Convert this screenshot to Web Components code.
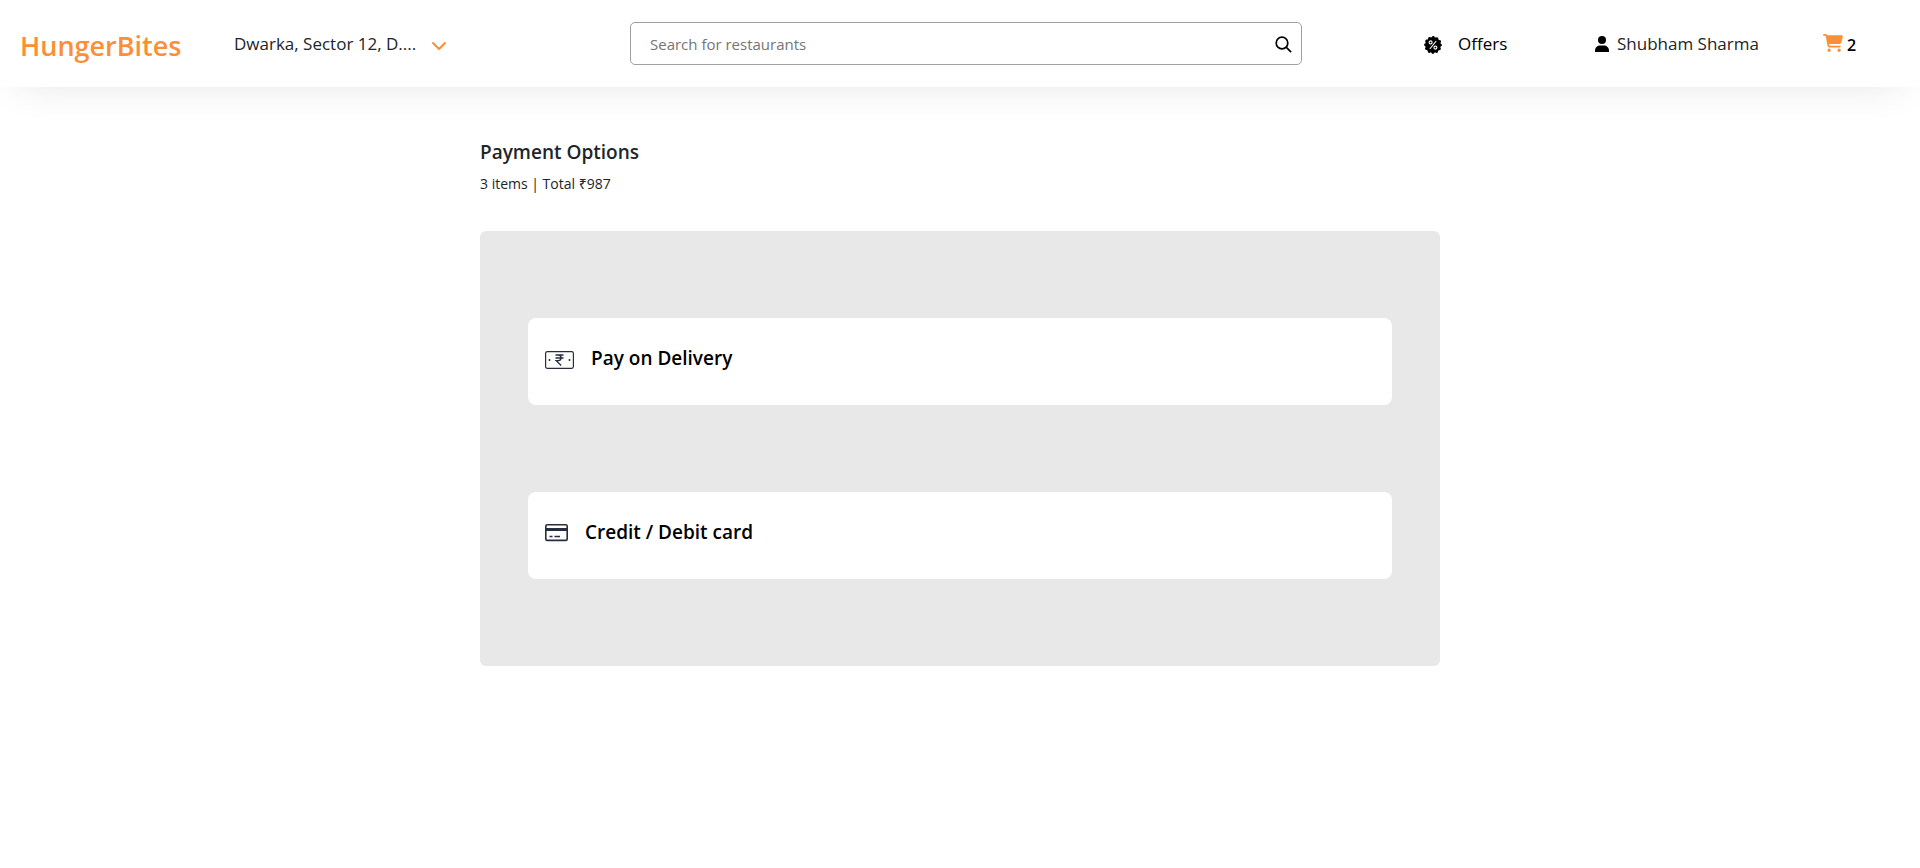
<!DOCTYPE html>
<html lang="en">
<head>
<meta charset="utf-8">
<meta name="viewport" content="width=device-width, initial-scale=1">
<title>HungerBites</title>
<style>
  body { margin: 0; background: #fff; color: #212529; font-family: "Open Sans", "Noto Sans", sans-serif; font-size: 16px; line-height: 24px; }
</style>
</head>
<body>
<hb-app></hb-app>
<script>
  const define = (name, html) => {
    const template = document.createElement('template');
    template.innerHTML = '<style>*{box-sizing:border-box}</style>' + html;
    customElements.define(name, class extends HTMLElement {
      constructor() {
        super();
        this.attachShadow({ mode: 'open' }).append(template.content.cloneNode(true));
      }
    });
  };

  define('hb-logo', `
    <style>
      :host { display: block; }
      a { color: #fc8f36; font-size: 27px; line-height: 40px; font-weight: 600; text-decoration: none; }
    </style>
    <a href="#"><slot></slot></a>`);

  define('hb-location', `
    <style>
      :host { display: block; }
      button { display: flex; align-items: center; gap: 15px; padding: 0; border: 0; background: none; color: inherit; font: inherit; font-size: 17px; white-space: nowrap; cursor: pointer; }
      svg { display: block; margin-top: 4px; }
    </style>
    <button type="button"><slot></slot>
      <svg width="16" height="10" viewBox="0 0 16 10" fill="none" stroke="#fc8f36" stroke-width="2" stroke-linecap="round" stroke-linejoin="round" aria-hidden="true"><path d="M2 2l6 6 6-6"/></svg>
    </button>`);

  define('hb-search', `
    <style>
      :host { display: block; }
      form { display: flex; align-items: center; height: 43px; padding: 0 9px 0 19px; border: 1px solid #a0a0a0; border-radius: 5px; background: #fff; }
      input { flex: 1; min-width: 0; padding: 0; border: 0; outline: 0; background: none; color: #212529; font: inherit; font-size: 15px; }
      input::placeholder { color: #757575; opacity: 1; }
      button { padding: 0; border: 0; background: none; color: #000; cursor: pointer; }
      svg { display: block; }
    </style>
    <form role="search">
      <input type="text" aria-label="Search for restaurants" placeholder="Search for restaurants">
      <button type="button" aria-label="Search">
        <svg width="18" height="18" viewBox="0 0 18 18" fill="none" stroke="currentColor" stroke-width="1.700" aria-hidden="true"><circle cx="8" cy="8" r="5.800"/><path d="M12.100 12.100l5 5"/></svg>
      </button>
    </form>`);

  define('hb-nav-link', `
    <style>
      :host { display: block; font-size: 17px; }
      a { display: flex; align-items: center; gap: var(--gap, 8px); color: inherit; text-decoration: none; white-space: nowrap; }
    </style>
    <a href="#"><slot name="icon"></slot><slot></slot></a>`);

  define('hb-header', `
    <style>
      :host { display: grid; grid-template-columns: 234fr 396fr 794fr 171fr 228fr 97fr; align-items: center; min-height: 87px; background: #fff; box-shadow: 0 15px 40px -20px rgba(40, 44, 63, .15); }
      :host > * { min-width: 0; }
      hb-logo { padding: 4px 0 0 20px; }
      hb-search { width: 84.6%; }
      .offers { --gap: 16px; color: #000; }
      .cart { --gap: 4px; padding-top: 2px; font-size: 16px; font-weight: 600; color: #000; }
      svg { display: block; flex: none; }
      .offers svg { margin-top: 2px; }
      .cart svg { margin-bottom: 4px; }
    </style>
    <hb-logo>HungerBites</hb-logo>
    <hb-location>Dwarka, Sector 12, D....</hb-location>
    <hb-search></hb-search>
    <hb-nav-link class="offers">
      <svg slot="icon" width="18" height="18" viewBox="0 0 18 18" aria-hidden="true">
        <circle cx="9" cy="9" r="7.900"/>
        <circle cx="9" cy="9" r="7.600" fill="none" stroke="#000" stroke-width="2.600" stroke-linecap="round" stroke-dasharray="0.100 3.879"/>
        <g fill="none" stroke="#fff" stroke-width="1.100"><circle cx="6.600" cy="6.400" r="1.500"/><circle cx="11.400" cy="11.600" r="1.500"/><path d="M12.200 5l-6.400 8"/></g>
      </svg>Offers</hb-nav-link>
    <hb-nav-link>
      <svg slot="icon" width="14" height="16" viewBox="0 0 14 16" aria-hidden="true"><circle cx="7" cy="4" r="4"/><path d="M0 16v-1.500C0 11.500 2.500 9.500 5 9.500h4c2.500 0 5 2 5 5V16z"/></svg>Shubham Sharma</hb-nav-link>
    <hb-nav-link class="cart">
      <svg slot="icon" width="20" height="18" viewBox="0 0 576 512" fill="#fc8f36" aria-hidden="true"><path d="M0 24C0 10.700 10.700 0 24 0h45.500c22 0 41.500 12.800 50.600 32h411c26.300 0 45.500 25 38.600 50.400l-41 152.300c-8.500 31.400-37 53.300-69.500 53.300H170.700l5.400 28.500c2.200 11.300 12.100 19.500 23.600 19.500H488c13.300 0 24 10.700 24 24s-10.700 24-24 24H199.700c-34.600 0-64.300-24.600-70.700-58.500L77.400 54.500c-.7-3.800-4-6.500-7.900-6.500H24C10.700 48 0 37.300 0 24zm128 440a48 48 0 1 1 96 0 48 48 0 1 1-96 0zm336-48a48 48 0 1 1 0 96 48 48 0 1 1 0-96z"/></svg>2</hb-nav-link>`);

  define('hb-option', `
    <style>
      :host { display: block; }
      button { display: flex; align-items: flex-start; gap: 17px; width: 100%; min-height: 87px; padding: 26px 17px; border: 0; border-radius: 8px; background: #fff; color: #000; font: inherit; font-size: 19px; line-height: 28px; font-weight: 600; text-align: left; cursor: pointer; }
      ::slotted(svg) { display: block; margin-top: 6px; }
    </style>
    <button type="button"><slot name="icon"></slot><slot></slot></button>`);

  define('hb-payment', `
    <style>
      :host { display: block; width: 50%; margin: 0 auto; padding-top: 51px; }
      h1 { margin: 0; font-size: 19px; line-height: 28px; font-weight: 600; }
      p { margin: 6px 0 35px; font-size: 14px; line-height: 24px; }
      .panel { display: grid; gap: 87px; padding: 87px 5%; border-radius: 6px; background: #e8e8e8; }
    </style>
    <h1>Payment Options</h1>
    <p>3 items | Total ₹987</p>
    <div class="panel">
      <hb-option>
        <svg slot="icon" width="29" height="20" viewBox="0 0 29 20" fill="none" stroke="#282c3f" aria-hidden="true"><rect x=".6" y="1.600" width="27.800" height="16.800" rx="1.800" stroke-width="1.200"/><path d="M10.500 5h8M10.500 8h8M11 5h2.200c3.800 0 3.800 5.700 0 5.700h-2l5 4.800" stroke-width="1.300"/><g fill="#282c3f" stroke="none"><circle cx="4.500" cy="10" r="1"/><circle cx="24.500" cy="10" r="1"/></g></svg>Pay on Delivery</hb-option>
      <hb-option>
        <svg slot="icon" width="23" height="18" viewBox="0 0 23 18" fill="none" stroke="#282c3f" aria-hidden="true"><rect x=".8" y=".8" width="21.400" height="15.600" rx="1.500" stroke-width="1.600"/><path d="M1 5.500h21" stroke-width="3"/><path d="M4.500 12.500h3M9.500 12.500h5.500" stroke-width="1.500"/></svg>Credit / Debit card</hb-option>
    </div>`);

  define('hb-app', `
    <style>:host { display: block; } header, main { display: block; }</style>
    <header><hb-header></hb-header></header>
    <main><hb-payment></hb-payment></main>`);
</script>
</body>
</html>
